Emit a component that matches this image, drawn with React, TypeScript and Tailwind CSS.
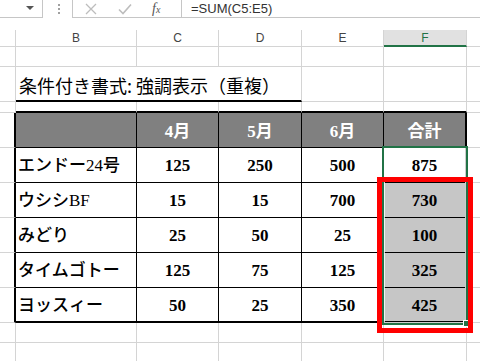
import React from "react";

const ui = "font-['Liberation_Sans',sans-serif]";
const cellFont = "font-['Liberation_Serif','Noto_Sans_CJK_JP',serif] font-bold text-[17px]";
const grid = "border-[#d4d4d4]";

const widths = ["w-[16px]", "w-[121px]", "w-[82px]", "w-[83px]", "w-[82px]", "w-[83px]"];

const rows = [
  { name: "エンドー24号", v: ["125", "250", "500", "875"] },
  { name: "ウシシBF", v: ["15", "15", "700", "730"] },
  { name: "みどり", v: ["25", "50", "25", "100"] },
  { name: "タイムゴトー", v: ["125", "75", "125", "325"] },
  { name: "ヨッスィー", v: ["50", "25", "350", "425"] },
];

// plain sheet row with only gridlines
function BlankRow({ h }: { h: string }) {
  return (
    <div className={`flex ${h}`}>
      {widths.map((w, i) => (
        <div key={i} className={`${w} shrink-0 border-r border-b ${grid}`} />
      ))}
      <div className={`flex-1 border-b ${grid}`} />
    </div>
  );
}

function FormulaBar() {
  return (
    <div className={`flex h-[18px] ${ui}`}>
      <div className="relative w-[43px] shrink-0 border-r border-b border-[#c6c6c6]">
        <span className="absolute right-[8px] top-[6px] h-0 w-0 border-x-[4px] border-t-[4px] border-x-transparent border-t-[#555]" />
      </div>
      <div className="flex w-[29px] shrink-0 flex-col items-center justify-center gap-[2px] pl-[2px]">
        <span className="h-[2px] w-[2px] bg-[#a0a0a0]" />
        <span className="h-[2px] w-[2px] bg-[#a0a0a0]" />
        <span className="h-[2px] w-[2px] bg-[#a0a0a0]" />
      </div>
      <div className="flex w-[109px] shrink-0 items-center border-l border-b border-[#c6c6c6]">
        <svg width="12" height="12" viewBox="0 0 12 12" className="ml-[12px]">
          <path d="M1 1 L11 11 M11 1 L1 11" stroke="#bdbdbd" strokeWidth="1.3" fill="none" />
        </svg>
        <svg width="14" height="12" viewBox="0 0 14 12" className="ml-[21px]">
          <path d="M1 6.5 L5 10.5 L13 1.5" stroke="#bdbdbd" strokeWidth="1.6" fill="none" />
        </svg>
        <span className="ml-[20px] font-['Liberation_Serif',serif] text-[14px] italic leading-none text-[#555]">
          f<span className="text-[10px]">x</span>
        </span>
      </div>
      <div className="flex flex-1 items-center border-l border-b border-[#c6c6c6] pl-[9px] text-[13px] leading-none text-[#333]">
        =SUM(C5:E5)
      </div>
    </div>
  );
}

function ColumnHeaders() {
  const letters = ["", "B", "C", "D", "E", "F"];
  return (
    <div className={`flex h-[17px] text-[12px] text-[#444] ${ui}`}>
      {letters.map((l, i) =>
        l === "F" ? (
          <div
            key={l}
            className={`${widths[i]} flex shrink-0 items-center justify-center border-r border-b-2 border-r-[#d4d4d4] border-b-[#217346] bg-[#e1e1e1] text-[#217346]`}
          >
            {l}
          </div>
        ) : (
          <div
            key={i}
            className={`${widths[i]} flex shrink-0 items-center justify-center border-r border-b ${grid}`}
          >
            {l}
          </div>
        )
      )}
      <div className={`flex-1 border-b ${grid}`} />
    </div>
  );
}

export default function App() {
  return (
    <div className="relative h-[361px] w-[480px] overflow-hidden bg-white">
      <FormulaBar />
      <div className="h-[12px]" />
      <ColumnHeaders />

      <BlankRow h="h-[20px]" />

      {/* title row */}
      <div className="flex h-[35px]">
        <div className={`w-[16px] shrink-0 border-r border-b ${grid}`} />
        <div className="relative flex w-[121px] shrink-0 items-end border-b-2 border-black pb-[6px] pl-[3px]">
          <span className="whitespace-nowrap font-['Noto_Sans_CJK_JP',sans-serif] text-[18px] leading-none text-black">
            条件付き書式: 強調表示（重複）
          </span>
        </div>
        <div className="w-[82px] shrink-0 border-b-2 border-black" />
        <div className="w-[83px] shrink-0 border-r border-b-2 border-r-[#d4d4d4] border-b-black" />
        <div className={`w-[82px] shrink-0 border-r border-b ${grid}`} />
        <div className={`w-[83px] shrink-0 border-r border-b ${grid}`} />
        <div className={`flex-1 border-b ${grid}`} />
      </div>

      {/* spacer row above the table */}
      <div className="flex h-[11px]">
        <div className={`w-[16px] shrink-0 border-r border-b ${grid}`} />
        {widths.slice(1).map((w, i) => (
          <div key={i} className={`${w} shrink-0 border-r border-b-2 border-r-[#d4d4d4] border-b-black`} />
        ))}
        <div className={`flex-1 border-b ${grid}`} />
      </div>

      {/* table header */}
      <div className={`flex h-[35px] ${cellFont} text-white`}>
        <div className={`w-[16px] shrink-0 border-r-2 border-b border-r-black border-b-[#d4d4d4]`} />
        <div className="w-[121px] shrink-0 border-r border-b border-black bg-[#808080]" />
        {["4月", "5月", "6月"].map((m, i) => (
          <div
            key={m}
            className={`${widths[i + 2]} flex shrink-0 items-center justify-center border-r border-b border-black bg-[#808080] pt-[3px] font-semibold`}
          >
            {m}
          </div>
        ))}
        <div className="flex w-[83px] shrink-0 items-center justify-center border-r-2 border-b border-black bg-[#808080] pt-[3px] font-semibold">
          合計
        </div>
        <div className={`flex-1 border-b ${grid}`} />
      </div>

      {/* table body */}
      {rows.map((r, ri) => {
        const last = ri === rows.length - 1;
        const bb = last ? "border-b-2" : "border-b";
        return (
          <div key={r.name} className={`flex h-[35px] ${cellFont} text-black`}>
            <div className={`w-[16px] shrink-0 border-r-2 border-b border-r-black border-b-[#d4d4d4]`} />
            <div className={`flex w-[121px] shrink-0 items-center border-r ${bb} border-black pl-[2px] pt-[2px] font-medium`}>
              {r.name}
            </div>
            {r.v.map((v, i) => (
              <div
                key={i}
                className={`${widths[i + 2]} flex shrink-0 items-center justify-center ${bb} border-black pt-[2px] ${
                  i === 3 ? "border-r-2" : "border-r"
                } ${i === 3 && ri > 0 ? "bg-[#c6c6c6]" : ""}`}
              >
                {v}
              </div>
            ))}
            <div className={`flex-1 border-b ${grid}`} />
          </div>
        );
      })}

      <BlankRow h="h-[20px]" />
      <BlankRow h="h-[20px]" />

      {/* selection range F5:F9 */}
      <div className="absolute left-[382px] top-[146px] h-[179px] w-[86px] border-2 border-[#217346]">
        <div className="h-full w-full border border-white/80" />
        <span className="absolute -bottom-[4px] -right-[4px] h-[7px] w-[7px] border border-white bg-[#217346]" />
      </div>

      {/* red annotation box */}
      <div className="absolute left-[377px] top-[177px] h-[156px] w-[96px] border-[5px] border-[#ff0000]" />
    </div>
  );
}
